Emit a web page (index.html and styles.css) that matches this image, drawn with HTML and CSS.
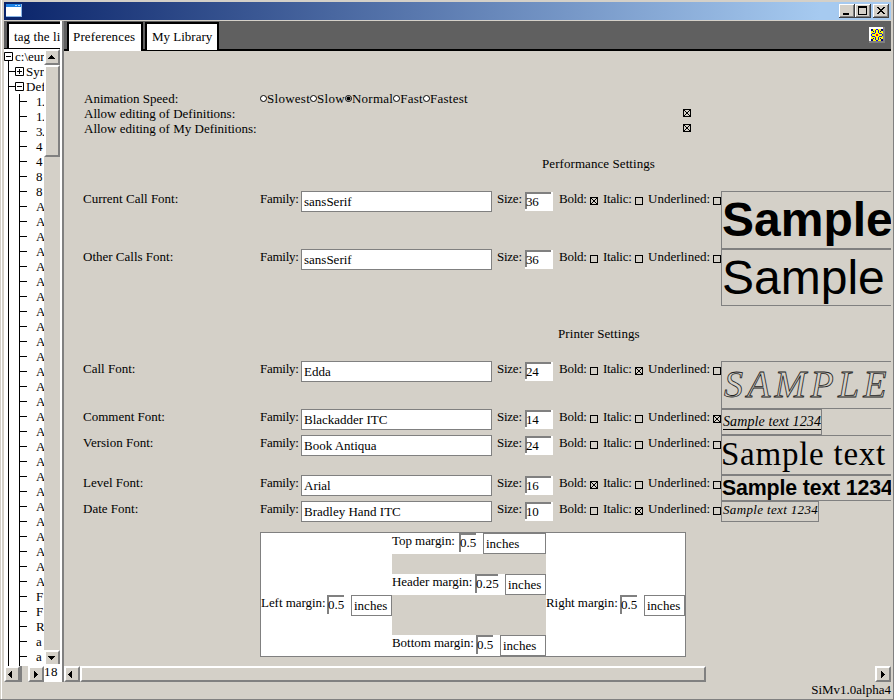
FILE: index.html
```html
<!DOCTYPE html>
<html lang="en">
<head>
<meta charset="utf-8">
<title>SiM</title>
<link rel="stylesheet" href="styles.css">
</head>
<body>
<div class="window">
  <div class="titlebar">
    <svg class="app-icon" width="16" height="13" viewBox="0 0 16 13" shape-rendering="crispEdges"><rect width="16" height="13" fill="#8cb8e8"/><rect width="15" height="3" fill="#1e83e6"/><path d="M9 1h2v1H9zM12 1h2v1h-2z" fill="#b8dcff"/><rect y="3" width="15" height="9" fill="#fff"/></svg>
    <div class="win-btn"><svg width="16" height="14" shape-rendering="crispEdges"><path d="M4 9h6v2H4z"/></svg></div>
    <div class="win-btn"><svg width="16" height="14" shape-rendering="crispEdges"><path d="M3 2h9v9H3zM4 4v6h7V4z" fill-rule="evenodd"/></svg></div>
    <div class="win-btn close"><svg width="16" height="14" shape-rendering="crispEdges"><path d="M4 3h2v1h1v1h2V4h1V3h2v1h-1v1h-1v1H9v1h1v1h1v1h1v1h-2V9H9V8H7v1H6v1H4V9h1V8h1V7h1V6H6V5H5V4H4z"/></svg></div>
  </div>
  <div class="panes">
    <div class="side">
      <div class="side-head"><div class="tab side-tab">tag the li</div></div>
      <div class="side-body">
        <div class="tree">
          <div class="node root"><svg width="9" height="9" class="box"><path d="M.5.5h8v8h-8zM2 4.5h5"/></svg>c:\eur</div>
          <div class="branch">
            <div class="node sub"><svg width="9" height="9" class="box"><path d="M.5.5h8v8h-8zM2 4.5h5M4.5 2v5"/></svg>Syr</div>
            <div class="node sub"><svg width="9" height="9" class="box"><path d="M.5.5h8v8h-8zM2 4.5h5"/></svg>Def</div>
            <div class="leaves">
              <div>1.</div><div>1.</div><div>3.</div><div>4</div><div>4</div><div>8</div><div>8</div>
              <div>A</div><div>A</div><div>A</div><div>A</div><div>A</div><div>A</div><div>A</div><div>A</div><div>A</div><div>A</div><div>A</div><div>A</div><div>A</div>
              <div>A</div><div>A</div><div>A</div><div>A</div><div>A</div><div>A</div><div>A</div><div>A</div><div>A</div><div>A</div><div>A</div><div>A</div><div>A</div>
              <div>F</div><div>F</div><div>R</div><div>a</div><div>a</div>
            </div>
          </div>
        </div>
        <div class="vscroll">
          <div class="raised btn-up"><svg width="7" height="4" shape-rendering="crispEdges"><path d="M3 0h1v1h1v1h1v1h1v1H0V3h1V2h1V1h1z"/></svg></div>
          <div class="raised vthumb"></div>
          <div class="raised btn-down"><svg width="7" height="4" shape-rendering="crispEdges"><path d="M0 0h7v1H6v1H5v1H4v1H3V3H2V2H1V1H0z"/></svg></div>
        </div>
      </div>
      <div class="side-foot">
        <div class="raised sq left"><svg width="4" height="7" shape-rendering="crispEdges"><path d="M3 0h1v7H3V6H2V5H1V4H0V3h1V2h1V1h1z"/></svg></div>
        <div class="stub"></div>
        <div class="raised sq"><svg width="4" height="7" shape-rendering="crispEdges"><path d="M0 0h1v1h1v1h1v1h1v1H3v1H2v1H1v1H0z"/></svg></div>
        <div class="count">18</div>
      </div>
    </div>
    <div class="splitter"></div>
    <div class="main">
      <div class="main-head">
        <div class="tab active">Preferences</div>
        <div class="tab">My Library</div>
        <svg class="logo" width="16" height="16" shape-rendering="crispEdges"><rect width="16" height="16" fill="#808080"/><rect width="14" height="14" fill="#fff"/><rect x="2" y="2" width="12" height="12" fill="#ff0"/><path fill="#000080" d="M2 2h2v2H2zM12 2h2v2h-2zM2 12h2v2H2zM12 12h2v2h-2zM4 4h1v1H4zM11 4h1v1h-1zM4 11h1v1H4zM11 11h1v1h-1z"/><path fill="#1010e0" d="M6 3h1v3H6zM9 3h1v3H9zM6 10h1v3H6zM9 10h1v3H9zM3 6h3v1H3zM3 9h3v1H3zM10 6h3v1h-3zM10 9h3v1h-3zM7 2h2v1H7zM7 13h2v1H7zM2 7h1v2H2zM13 7h1v2h-1z"/><path fill="#f00020" d="M7 7h2v2H7z"/></svg>
      </div>
      <div class="content">
        <div class="opt"><span>Animation Speed:</span><div class="radios"><i></i>Slowest<i></i>Slow<i class="on"></i>Normal<i></i>Fast<i></i>Fastest</div></div>
        <div class="opt"><span>Allow editing of Definitions:</span><b class="check on"></b></div>
        <div class="opt"><span>Allow editing of My Definitions:</span><b class="check on"></b></div>
        <div class="heading perf">Performance Settings</div>
        <div class="font-row h58"><span>Current Call Font:</span><span class="lab">Family:</span><div class="family">sansSerif</div><span class="lab">Size:</span><div class="size">36</div><span class="lab">Bold:</span><b class="check on"></b><span class="lab">Italic:</span><b class="check"></b><span>Underlined:</span><b class="check"></b><div class="sample current">Sample</div></div>
        <div class="font-row h57"><span>Other Calls Font:</span><span class="lab">Family:</span><div class="family">sansSerif</div><span class="lab">Size:</span><div class="size">36</div><span class="lab">Bold:</span><b class="check"></b><span class="lab">Italic:</span><b class="check"></b><span>Underlined:</span><b class="check"></b><div class="sample other">Sample</div></div>
        <div class="heading print">Printer Settings</div>
        <div class="font-row h48"><span>Call Font:</span><span class="lab">Family:</span><div class="family">Edda</div><span class="lab">Size:</span><div class="size">24</div><span class="lab">Bold:</span><b class="check"></b><span class="lab">Italic:</span><b class="check on"></b><span>Underlined:</span><b class="check"></b><div class="sample call">SAMPLE</div></div>
        <div class="font-row h26"><span>Comment Font:</span><span class="lab">Family:</span><div class="family">Blackadder ITC</div><span class="lab">Size:</span><div class="size">14</div><span class="lab">Bold:</span><b class="check"></b><span class="lab">Italic:</span><b class="check"></b><span>Underlined:</span><b class="check on"></b><div class="sample comment"><span>Sample text 1234</span></div></div>
        <div class="font-row h40"><span>Version Font:</span><span class="lab">Family:</span><div class="family">Book Antiqua</div><span class="lab">Size:</span><div class="size">24</div><span class="lab">Bold:</span><b class="check"></b><span class="lab">Italic:</span><b class="check"></b><span>Underlined:</span><b class="check"></b><div class="sample version">Sample text</div></div>
        <div class="font-row h26"><span>Level Font:</span><span class="lab">Family:</span><div class="family">Arial</div><span class="lab">Size:</span><div class="size">16</div><span class="lab">Bold:</span><b class="check on"></b><span class="lab">Italic:</span><b class="check"></b><span>Underlined:</span><b class="check"></b><div class="sample level">Sample text 1234</div></div>
        <div class="font-row h21"><span>Date Font:</span><span class="lab">Family:</span><div class="family">Bradley Hand ITC</div><span class="lab">Size:</span><div class="size">10</div><span class="lab">Bold:</span><b class="check"></b><span class="lab">Italic:</span><b class="check on"></b><span>Underlined:</span><b class="check"></b><div class="sample date">Sample text 1234</div></div>
        <div class="margins">
          <div class="m-side"><div class="m m-left"><span>Left margin:</span><div class="num">0.5</div><div class="unit">inches</div></div></div>
          <div class="m-mid">
            <div class="m m-top"><span>Top margin:</span><div class="num">0.5</div><div class="unit">inches</div></div>
            <div class="m m-header"><span>Header margin:</span><div class="num wide">0.25</div><div class="unit">inches</div></div>
            <div class="m m-bottom"><span>Bottom margin:</span><div class="num">0.5</div><div class="unit">inches</div></div>
          </div>
          <div class="m-side"><div class="m m-right"><span>Right margin:</span><div class="num">0.5</div><div class="unit">inches</div></div></div>
        </div>
      </div>
      <div class="hscroll">
        <div class="raised sq left"><svg width="4" height="7" shape-rendering="crispEdges"><path d="M3 0h1v7H3V6H2V5H1V4H0V3h1V2h1V1h1z"/></svg></div>
        <div class="raised hthumb"></div>
        <div class="raised sq last"><svg width="4" height="7" shape-rendering="crispEdges"><path d="M0 0h1v1h1v1h1v1h1v1H3v1H2v1H1v1H0z"/></svg></div>
      </div>
    </div>
  </div>
  <div class="status">SiMv1.0alpha4</div>
</div>
</body>
</html>
```
FILE: styles.css
```css
* { box-sizing: border-box; }
body {
  margin: 0;
  width: 894px;
  height: 700px;
  overflow: hidden;
  background: #d4d0c8;
  font: 13px/15px "Liberation Serif", serif;
  color: #000;
  white-space: nowrap;
}
svg { display: block; flex: none; }
.window {
  height: 700px;
  padding: 2px 2px 0 4px;
  border-right: 1px solid #808080;
  border-bottom: 1px solid #808080;
  box-shadow: inset 1px 0 #d4d0c8, inset 2px 0 #fff;
}
.titlebar {
  display: flex;
  height: 18px;
  padding: 2px 2px 0 2px;
  background: linear-gradient(90deg, #0a246a, #a6caf0 92%);
}
.app-icon { margin-right: auto; }
.win-btn {
  width: 16px;
  height: 14px;
  background: #d4d0c8;
  box-shadow: inset -1px -1px #404040, inset 1px 1px #fff, inset -2px -2px #808080;
}
.close { margin-left: 2px; }

.panes { display: flex; height: 661px; margin-top: 1px; }
.side { width: 56px; flex: none; }
.side-head {
  height: 28px;
  padding: 1px 0 0 3px;
  background: #606060;
  border-bottom: 1px solid #000;
  overflow: hidden;
}
.tab {
  height: 29px;
  padding: 5px 4px 0;
  background: #fff;
  border: 2px solid #000;
  border-bottom: 0;
}
.side-tab { height: 26px; padding: 5px 0 0 5px; border-right: 0; overflow: hidden; letter-spacing: .1px; }
.side-body { display: flex; height: 617px; }
.tree { width: 40px; height: 617px; background: #fff; overflow: hidden; }
.node { display: flex; height: 15px; }
.node .box { margin: 3px 2px 0 0; fill: none; stroke: #000; background: #fff; }
.branch {
  margin: -3px 0 0 4px;
  padding-top: 3px;
  border-left: 1px solid #000;
  background: #fff;
}
.root { position: relative; z-index: 1; }
.sub { background: linear-gradient(#000, #000) 0 7px / 6px 1px no-repeat; padding-left: 6px; }
.leaves { margin-left: 10px; padding-bottom: 2px; border-left: 1px solid #000; }
.leaves div {
  height: 15px;
  padding-left: 16px;
  letter-spacing: -.8px;
  background: linear-gradient(#000, #000) 0 7px / 7px 1px no-repeat;
}
.raised {
  background: #d4d0c8;
  border: 2px solid;
  border-color: #fff #808080 #808080 #fff;
}
.vscroll { width: 16px; display: flex; flex-direction: column; }
.btn-up, .btn-down { height: 16px; padding: 4px 0 0 2px; }
.vthumb { height: 92px; margin-bottom: auto; }
.side-foot { display: flex; height: 16px; }
.sq { width: 16px; height: 16px; flex: none; padding: 3px 0 0 4px; }
.sq.left { padding-left: 2px; }
.stub { width: 8px; border-left: 2px solid #808080; }
.count { flex: 1; margin-top: -2px; background: #fff; height: 18px; letter-spacing: .6px; }
.splitter { width: 4px; height: 661px; border-left: 2px solid #fff; border-right: 2px solid #808080; }

.main { width: 827px; flex: none; }
.main-head {
  display: flex;
  gap: 2px;
  height: 30px;
  padding: 1px 6px 0 3px;
  background: #606060;
  border-bottom: 2px solid #000;
}
.main-head .tab { width: 74px; height: 28px; padding-left: 5px; }
.main-head .active { width: 76px; height: 29px; padding-left: 4px; letter-spacing: .15px; }
.logo { margin: 5px 0 0 auto; }

.content { height: 615px; padding: 40px 0 0 19px; overflow: hidden; }
.opt { display: flex; height: 15px; padding-left: 1px; }
.opt > span { width: 176px; flex: none; }
.opt .check { margin: 3px 0 0 423px; }
.radios { display: flex; letter-spacing: .27px; }
.radios i {
  width: 7px;
  height: 7px;
  margin-top: 4px;
  border: 1px solid #000;
  border-radius: 50%;
  background: #fff;
}
.radios .on { background: radial-gradient(circle, #000 0 1.7px, #fff 2.3px); }
.check { display: block; width: 8px; height: 8px; border: 1px solid #000; flex: none; }
.check.on {
  background:
    linear-gradient(45deg, transparent 42%, #000 43% 57%, transparent 58%),
    linear-gradient(135deg, transparent 42%, #000 43% 57%, transparent 58%);
}
.heading { height: 15px; letter-spacing: .07px; }
.perf { margin: 20px 0 20px 459px; }
.print { margin: 20px 0 20px 475px; }
.font-row {
  display: grid;
  grid-template-columns: 177px 41px 196px 28px 34px 31px 13px 32px 13px 65px 8px 170px;
  align-items: start;
}
.font-row .check { margin-top: 6px; }
.lab { letter-spacing: -.25px; }
.h58 { height: 58px; }
.h57 { height: 57px; }
.h48 { height: 48px; }
.h40 { height: 40px; }
.h26 { height: 26px; }
.h21 { height: 21px; }
.family { width: 191px; height: 21px; padding: 2px 2px 0; border: 1px solid #808080; background: #fff; }
.size {
  width: 28px;
  height: 19px;
  margin-top: 1px;
  padding: 2px 1px;
  letter-spacing: -.2px;
  background:
    linear-gradient(#808080, #808080) 0 0 / 26px 2px no-repeat,
    linear-gradient(#808080, #808080) 0 0 / 2px 17px no-repeat,
    #fff;
}
.sample { align-self: stretch; border: 1px solid #808080; border-right: 0; overflow: hidden; }
.current, .other { font: 48px/55px "Liberation Sans", Arial, sans-serif; }
.current { font-weight: bold; }
.call {
  padding-left: 2px;
  font: italic 38px/44px "Liberation Serif", serif;
  letter-spacing: 4.2px;
  color: transparent;
  -webkit-text-stroke: .8px #222;
}
.comment { width: 101px; border-right: 1px solid #808080; padding-left: 1px; font: italic 14px/25px "Liberation Serif", serif; }
.comment span { display: block; height: 20px; width: 98px; border-bottom: 1px solid #000; letter-spacing: .1px; line-height: 24px; }
.version { font: 33px/37px "Liberation Serif", serif; letter-spacing: .75px; text-indent: -1px; }
.level { font: bold 21.33px/24px "Liberation Sans", Arial, sans-serif; letter-spacing: -.15px; }
.date { width: 98px; border-right: 1px solid #808080; padding-left: 1px; font: italic 13px/15px "Liberation Serif", serif; letter-spacing: .35px; }

.margins {
  display: flex;
  width: 426px;
  height: 125px;
  margin: 10px 0 0 177px;
  border: 1px solid #808080;
  background: #fff;
}
.m-side { width: 131px; padding-top: 62px; }
.m-side:last-child { width: 139px; }
.m-mid {
  display: grid;
  grid-template-rows: 41px 61px 21px;
  width: 154px;
  background: #d4d0c8;
}
.m { display: flex; height: 21px; background: #fff; }
.m span { flex: none; letter-spacing: -.05px; }
.m-top span { width: 67px; }
.m-header span { width: 83px; }
.m-bottom span { width: 84px; }
.m-left span { width: 66px; }
.m-right span { width: 74px; }
.num {
  flex: none;
  width: 17px;
  height: 19px;
  margin-right: 7px;
  padding: 2px 0 0 1px;
  background:
    linear-gradient(#808080, #808080) 0 0 / 100% 2px no-repeat,
    linear-gradient(#808080, #808080) 0 0 / 2px 100% no-repeat;
}
.num.wide { width: 23px; }
.unit { flex: 1; height: 21px; padding: 2px 1px 0 2px; border: 1px solid #808080; background: #fff; }

.hscroll { display: flex; height: 16px; }
.hthumb { width: 626px; }
.last { margin-left: auto; }
.status { text-align: right; height: 17px; }
```
